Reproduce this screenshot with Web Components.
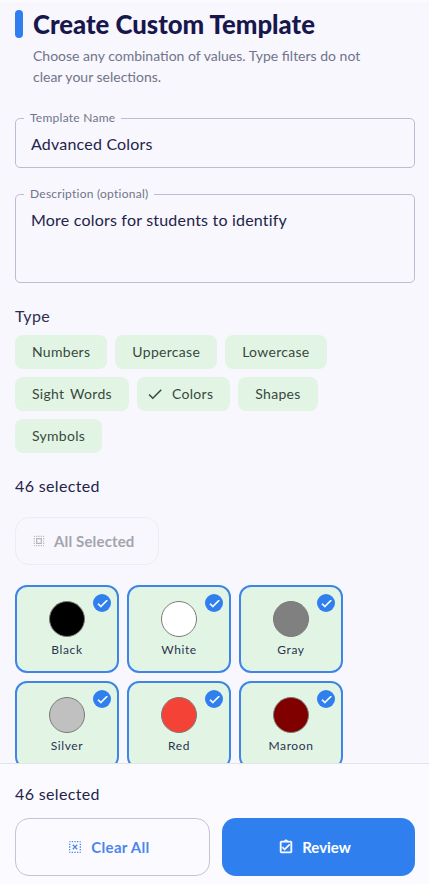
<!DOCTYPE html>
<html lang="en">
<head>
<meta charset="utf-8">
<title>Create Custom Template</title>
<style>
  html, body { margin: 0; height: 100%; background: #f7f7fd; }
  body { font-family: "Lato", "Open Sans", sans-serif; color: #1c1b3f; overflow: hidden; }
</style>
</head>
<body>
<template-page>
  <page-heading title="Create Custom Template">Choose any combination of values. Type filters do not clear your selections.</page-heading>
  <outlined-field label="Template Name" height="50" gap="26">Advanced Colors</outlined-field>
  <outlined-field label="Description (optional)" height="89" gap="22">More colors for students to identify</outlined-field>
  <type-filters></type-filters>
  <select-all-button></select-all-button>
  <color-grid></color-grid>
</template-page>

<script>
// Material style icon paths, all on a 24 box
const ICONS = {
  check: 'M9 16.17L4.83 12l-1.42 1.41L9 19 21 7l-1.41-1.41z',
  selectAll: 'M3 5h2V3c-1.1 0-2 .9-2 2zm0 8h2v-2H3v2zm4 8h2v-2H7v2zM3 9h2V7H3v2zm10-6h-2v2h2V3zm6 0v2h2c0-1.1-.9-2-2-2zM5 21v-2H3c0 1.1.9 2 2 2zm-2-4h2v-2H3v2zM9 3H7v2h2V3zm2 18h2v-2h-2v2zm8-8h2v-2h-2v2zm0 8c1.1 0 2-.9 2-2h-2v2zm0-12h2V7h-2v2zm0 8h2v-2h-2v2zm-4 4h2v-2h-2v2zm0-16h2V3h-2v2zM7 17h10V7H7v10zm2-8h6v6H9V9z',
  clipboard: 'M18 9l-1.41-1.42L10 14.17l-2.59-2.58L6 13l4 4zm1-6h-4.18C14.4 1.84 13.3 1 12 1c-1.3 0-2.4.84-2.82 2H5c-.14 0-.27.01-.4.04-.39.08-.74.28-1.01.55-.18.18-.33.4-.43.64-.1.23-.16.49-.16.77v14c0 .27.06.54.16.78s.25.45.43.64c.27.27.62.47 1.01.55.13.02.26.03.4.03h14c1.1 0 2-.9 2-2V5c0-1.1-.9-2-2-2zm-7-.25c.41 0 .75.34.75.75s-.34.75-.75.75-.75-.34-.75-.75.34-.75.75-.75zM19 19H5V5h14v14z',
  deselect: 'M3 5h2V3c-1.1 0-2 .9-2 2zm0 8h2v-2H3v2zm4 8h2v-2H7v2zM3 9h2V7H3v2zm10-6h-2v2h2V3zm6 0v2h2c0-1.1-.9-2-2-2zM5 21v-2H3c0 1.1.9 2 2 2zm-2-4h2v-2H3v2zM9 3H7v2h2V3zm2 18h2v-2h-2v2zm8-8h2v-2h-2v2zm0 8c1.1 0 2-.9 2-2h-2v2zm0-12h2V7h-2v2zm0 8h2v-2h-2v2zm-4 4h2v-2h-2v2zm0-16h2V3h-2v2zM9.4 8L8 9.4l2.6 2.6L8 14.6 9.4 16l2.6-2.6 2.6 2.6 1.4-1.4-2.6-2.6L16 9.4 14.6 8 12 10.6z'
};

function icon(name, size) {
  return `<svg width="${size}" height="${size}" viewBox="0 0 24 24" fill="currentColor" aria-hidden="true"><path d="${ICONS[name]}"/></svg>`;
}

class TemplatePage extends HTMLElement {
  constructor() {
    super();
    this.attachShadow({ mode: 'open' });
    this.shadowRoot.innerHTML = `
      <style>
        :host { display: flex; flex-direction: column; height: 884px; }
        .content {
          flex: 1;
          min-height: 0;
          overflow: hidden;
          padding: 8px 14px 0 15px;
          border-top: 2px solid #fbfaff;
        }
      </style>
      <div class="content"><slot></slot></div>
      <page-footer></page-footer>
    `;
  }
}

class PageHeading extends HTMLElement {
  constructor() {
    super();
    this.attachShadow({ mode: 'open' });
    this.shadowRoot.innerHTML = `
      <style>
        :host { display: block; margin-bottom: 31px; }
        .row { display: flex; align-items: center; gap: 10px; }
        .bar { width: 8px; height: 28px; border-radius: 4px; background: #2f7fee; }
        h1 { margin: 0; font-size: 25.7px; line-height: 28px; font-weight: 900; color: #17174d; }
        p { margin: 7px 30px 0 18px; font-size: 14px; line-height: 21px; color: #71748a; }
      </style>
      <div class="row"><span class="bar"></span><h1>${this.getAttribute('title')}</h1></div>
      <p><slot></slot></p>
    `;
  }
}

class OutlinedField extends HTMLElement {
  constructor() {
    super();
    this.attachShadow({ mode: 'open' });
    const h = this.getAttribute('height');
    this.shadowRoot.innerHTML = `
      <style>
        :host { display: block; margin-bottom: ${this.getAttribute('gap')}px; }
        fieldset {
          margin: 0;
          padding: 0 15px;
          box-sizing: border-box;
          height: ${Number(h) + 7}px;
          margin-top: -7px;
          border: 1px solid #bdbdd2;
          border-radius: 5px;
        }
        legend {
          margin-left: -7px;
          padding: 0 6px;
          font-size: 12px;
          line-height: 14px;
          letter-spacing: .25px;
          color: #71748a;
        }
        .value { font-size: 16px; line-height: 22px; letter-spacing: .2px; color: #24234a; margin-top: 8px; }
      </style>
      <fieldset>
        <legend>${this.getAttribute('label')}</legend>
        <div class="value"><slot></slot></div>
      </fieldset>
    `;
  }
}

class FilterChip extends HTMLElement {
  constructor() {
    super();
    this.attachShadow({ mode: 'open' });
    const on = this.hasAttribute('selected');
    this.shadowRoot.innerHTML = `
      <style>
        :host {
          display: inline-flex;
          align-items: center;
          gap: 8px;
          box-sizing: border-box;
          height: 34px;
          padding: 0 17px 1px ${on ? 9 : 17}px;
          border-radius: 8px;
          background: #e2f5e4;
          font-size: 14px;
          letter-spacing: .3px;
          word-spacing: 2px;
          color: #39483f;
        }
        svg { display: block; }
      </style>
      ${on ? icon('check', 18) : ''}<slot></slot>
    `;
  }
}

class TypeFilters extends HTMLElement {
  constructor() {
    super();
    this.attachShadow({ mode: 'open' });
    const types = ['Numbers', 'Uppercase', 'Lowercase', 'Sight Words', 'Colors', 'Shapes', 'Symbols'];
    const chips = types.map(t => `<filter-chip ${t === 'Colors' ? 'selected' : ''}>${t}</filter-chip>`).join('');
    this.shadowRoot.innerHTML = `
      <style>
        :host { display: block; }
        .label { font-size: 16px; line-height: 22px; letter-spacing: .3px; color: #2e2d52; margin-bottom: 8px; }
        .chips { display: flex; flex-wrap: wrap; gap: 8px; margin-right: 30px; }
        .count { margin-top: 22px; font-size: 16px; line-height: 22px; letter-spacing: .35px; color: #24234a; }
      </style>
      <div class="label">Type</div>
      <div class="chips">${chips}</div>
      <div class="count">46 selected</div>
    `;
  }
}

class SelectAllButton extends HTMLElement {
  constructor() {
    super();
    this.attachShadow({ mode: 'open' });
    this.shadowRoot.innerHTML = `
      <style>
        :host {
          display: flex;
          align-items: center;
          gap: 8px;
          box-sizing: border-box;
          width: 144px;
          height: 48px;
          margin: 20px 0;
          padding-left: 16px;
          border: 1px solid #ececf4;
          border-radius: 14px;
          font-size: 15px;
          font-weight: 700;
          letter-spacing: .15px;
          color: #a4a4ae;
        }
        svg { display: block; color: #b4b4bc; }
      </style>
      ${icon('selectAll', 14)}<span>All Selected</span>
    `;
  }
}

class ColorCard extends HTMLElement {
  constructor() {
    super();
    this.attachShadow({ mode: 'open' });
    this.shadowRoot.innerHTML = `
      <style>
        :host {
          position: relative;
          display: flex;
          flex-direction: column;
          align-items: center;
          box-sizing: border-box;
          height: 88px;
          padding-top: 14px;
          border: 2px solid #3f84e8;
          border-radius: 12px;
          background: #e2f5e4;
          font-size: 12px;
          color: #2a3350;
        }
        .swatch {
          width: 36px;
          height: 36px;
          box-sizing: border-box;
          border-radius: 50%;
          border: 1px solid #7a7a7a;
          background: ${this.getAttribute('color')};
        }
        .name { margin-top: 5px; line-height: 16px; letter-spacing: .6px; }
        .badge {
          position: absolute;
          top: 7px;
          right: 6px;
          width: 18px;
          height: 18px;
          display: flex;
          align-items: center;
          justify-content: center;
          border-radius: 50%;
          background: #2f7fee;
          color: #fff;
        }
        svg { display: block; }
        .badge path { stroke: currentColor; stroke-width: 1.4; }
      </style>
      <span class="badge">${icon('check', 13)}</span>
      <span class="swatch"></span>
      <span class="name"><slot></slot></span>
    `;
  }
}

class ColorGrid extends HTMLElement {
  constructor() {
    super();
    this.attachShadow({ mode: 'open' });
    const colors = [
      ['Black', '#000000'], ['White', '#ffffff'], ['Gray', '#808080'],
      ['Silver', '#c0c0c0'], ['Red', '#f44336'], ['Maroon', '#800000']
    ];
    this.shadowRoot.innerHTML = `
      <style>
        :host { display: grid; grid-template-columns: repeat(3, 104px); gap: 8px; }
      </style>
      ${colors.map(c => `<color-card color="${c[1]}">${c[0]}</color-card>`).join('')}
    `;
  }
}

class PageFooter extends HTMLElement {
  constructor() {
    super();
    this.attachShadow({ mode: 'open' });
    this.shadowRoot.innerHTML = `
      <style>
        :host {
          display: block;
          flex: none;
          box-sizing: border-box;
          height: 121px;
          padding: 19px 14px 8px 15px;
          background: #fbfaff;
          border-top: 1px solid #e3e3ea;
        }
        .count { font-size: 16px; line-height: 22px; letter-spacing: .35px; color: #24234a; margin-bottom: 13px; }
        .actions { display: grid; grid-template-columns: 195px 193px; gap: 12px; }
        button {
          display: flex;
          align-items: center;
          justify-content: center;
          gap: 8px;
          height: 58px;
          padding: 0 8px 0 0;
          border-radius: 14px;
          font: 700 15px "Lato", "Open Sans", sans-serif;
        }
        .clear { background: transparent; border: 1px solid #c4c4d4; color: #4d86ea; letter-spacing: .3px; }
        .review { background: #2f7fee; border: 0; color: #fff; }
        .review path { stroke: currentColor; stroke-width: .7; }
        svg { display: block; }
      </style>
      <div class="count">46 selected</div>
      <div class="actions">
        <button class="clear">${icon('deselect', 16)}<span>Clear All</span></button>
        <button class="review">${icon('clipboard', 16)}<span>Review</span></button>
      </div>
    `;
  }
}

customElements.define('template-page', TemplatePage);
customElements.define('page-heading', PageHeading);
customElements.define('outlined-field', OutlinedField);
customElements.define('filter-chip', FilterChip);
customElements.define('type-filters', TypeFilters);
customElements.define('select-all-button', SelectAllButton);
customElements.define('color-card', ColorCard);
customElements.define('color-grid', ColorGrid);
customElements.define('page-footer', PageFooter);
</script>
</body>
</html>
